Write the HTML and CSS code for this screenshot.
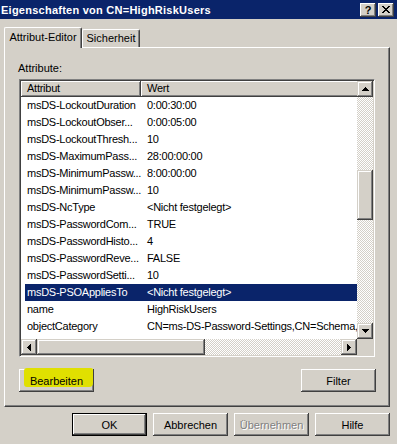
FILE: index.html
```html
<!DOCTYPE html>
<html lang="de">
<head>
    <meta charset="UTF-8">
    <title>Eigenschaften von CN=HighRiskUsers</title>
    <link rel="stylesheet" href="styles.css">
</head>
<body>

<div class="window">
    <div class="titlebar">
        <span class="title">Eigenschaften von CN=HighRiskUsers</span>
        <div class="caption-btns">
            <button class="cap" type="button">?</button>
            <button class="cap" type="button">
                <svg width="8" height="7" viewBox="0 0 8 7" shape-rendering="crispEdges">
                    <path d="M0 0h2v1h1v1h2V1h1V0h2v1H7v1H6v1H5v1h1v1h1v1h1v1H6V6H5V5H3v1H2v1H0V6h1V5h1V4h1V3H2V2H1V1H0z" fill="#000"/>
                </svg>
            </button>
        </div>
    </div>

    <div class="tabs">
        <div class="tab active">Attribut-Editor</div>
        <div class="tab">Sicherheit</div>
    </div>

    <div class="panel">
        <div class="label">Attribute:</div>

        <div class="listview">
            <div class="lv-content">
                <div class="lv-header">
                    <div class="hcell c1">Attribut</div>
                    <div class="hcell c2">Wert</div>
                </div>
                <div class="row"><div class="c1">msDS-LockoutDuration</div><div class="c2">0:00:30:00</div></div>
                <div class="row"><div class="c1">msDS-LockoutObser...</div><div class="c2">0:00:05:00</div></div>
                <div class="row"><div class="c1">msDS-LockoutThresh...</div><div class="c2">10</div></div>
                <div class="row"><div class="c1">msDS-MaximumPass...</div><div class="c2">28:00:00:00</div></div>
                <div class="row"><div class="c1">msDS-MinimumPassw...</div><div class="c2">8:00:00:00</div></div>
                <div class="row"><div class="c1">msDS-MinimumPassw...</div><div class="c2">10</div></div>
                <div class="row"><div class="c1">msDS-NcType</div><div class="c2">&lt;Nicht festgelegt&gt;</div></div>
                <div class="row"><div class="c1">msDS-PasswordCom...</div><div class="c2">TRUE</div></div>
                <div class="row"><div class="c1">msDS-PasswordHisto...</div><div class="c2">4</div></div>
                <div class="row"><div class="c1">msDS-PasswordReve...</div><div class="c2">FALSE</div></div>
                <div class="row"><div class="c1">msDS-PasswordSetti...</div><div class="c2">10</div></div>
                <div class="row selected"><div class="c1">msDS-PSOAppliesTo</div><div class="c2">&lt;Nicht festgelegt&gt;</div></div>
                <div class="row"><div class="c1">name</div><div class="c2">HighRiskUsers</div></div>
                <div class="row"><div class="c1">objectCategory</div><div class="c2">CN=ms-DS-Password-Settings,CN=Schema,CN=Configuration,DC=corp</div></div>
                <div class="row"><div class="c1">objectClass</div><div class="c2">top;msDS-PasswordSettings</div></div>
            </div>

            <div class="vscroll">
                <div class="sbtn">
                    <svg width="7" height="4" viewBox="0 0 7 4" shape-rendering="crispEdges"><path d="M3 0h1v1h1v1h1v1h1v1H0V3h1V2h1V1h1z"/></svg>
                </div>
                <div class="track" style="height:73px"></div>
                <div class="thumb" style="height:50px"></div>
                <div class="track grow"></div>
                <div class="sbtn">
                    <svg width="7" height="4" viewBox="0 0 7 4" shape-rendering="crispEdges"><path d="M0 0h7v1H6v1H5v1H4v1H3V3H2V2H1V1H0z"/></svg>
                </div>
            </div>

            <div class="hscroll">
                <div class="sbtn">
                    <svg width="4" height="7" viewBox="0 0 4 7" shape-rendering="crispEdges"><path d="M3 0h1v7H3V6H2V5H1V4H0V3h1V2h1V1h1z"/></svg>
                </div>
                <div class="thumb" style="width:168px"></div>
                <div class="track grow"></div>
                <div class="sbtn">
                    <svg width="4" height="7" viewBox="0 0 4 7" shape-rendering="crispEdges"><path d="M0 0h1v1h1v1h1v1h1v1H3v1H2v1H1v1H0z"/></svg>
                </div>
            </div>

            <div class="corner"></div>
        </div>

        <div class="panel-btns">
            <button class="btn edit" type="button"><span>Bearbeiten</span></button>
            <button class="btn" type="button">Filter</button>
        </div>
    </div>

    <div class="dialog-btns">
        <button class="btn default" type="button">OK</button>
        <button class="btn" type="button">Abbrechen</button>
        <button class="btn disabled" type="button">Übernehmen</button>
        <button class="btn" type="button">Hilfe</button>
    </div>
</div>

</body>
</html>
```

FILE: styles.css
```css
/* classic dialog window */
body {
    margin: 0;
    background-color: #d4d0c8;
    font-family: "Liberation Sans", Arial, sans-serif;
    font-size: 11px;
    color: #000;
}
.window {
    width: 397px;
    height: 444px;
    overflow: hidden;
}

/* title bar */
.titlebar {
    height: 19px;
    background-color: #0a246a;
    display: flex;
    align-items: center;
    justify-content: space-between;
    padding-left: 1px;
}
.title {
    color: #fff;
    font-weight: bold;
    font-size: 11px;
    letter-spacing: 0.25px;
    white-space: nowrap;
}
.caption-btns {
    display: flex;
    gap: 2px;
    margin-right: 3px;
}
.cap {
    width: 16px;
    height: 14px;
    padding: 0;
    border: none;
    background-color: #d4d0c8;
    box-shadow: inset -1px -1px #404040, inset 1px 1px #fff, inset -2px -2px #808080;
    font-family: "Liberation Sans", Arial, sans-serif;
    font-weight: bold;
    font-size: 11px;
    line-height: 14px;
    display: flex;
    align-items: center;
    justify-content: center;
}

/* tabs */
.tabs {
    display: flex;
    align-items: flex-end;
    margin-top: 8px;
    padding-left: 4px;
    height: 20px;
}
.tab {
    height: 18px;
    line-height: 17px;
    text-align: center;
    background-color: #d4d0c8;
    border-left: 1px solid #fff;
    border-top: 1px solid #fff;
    border-right: 1px solid #404040;
    box-shadow: inset -1px 0 #808080;
    border-radius: 2px 2px 0 0;
    box-sizing: border-box;
    width: 58px;
}
.tab.active {
    width: 78px;
    height: 21px;
    line-height: 19px;
    margin-bottom: -1px;
    position: relative;
    z-index: 1;
}

/* tab page */
.panel {
    margin-left: 4px;
    width: 386px;
    height: 360px;
    box-sizing: border-box;
    border-left: 1px solid #fff;
    border-top: 1px solid #fff;
    border-right: 1px solid #404040;
    border-bottom: 1px solid #404040;
    box-shadow: inset -1px -1px #808080;
    padding: 14px 0 0 14px;
}
.label {
    height: 13px;
    line-height: 13px;
    margin-left: -1px;
    margin-bottom: 4px;
}

/* list view */
.listview {
    width: 356px;
    height: 278px;
    box-sizing: border-box;
    border-top: 1px solid #808080;
    border-left: 1px solid #808080;
    border-right: 1px solid #fff;
    border-bottom: 1px solid #fff;
    box-shadow: inset 1px 1px #404040, inset -1px -1px #d4d0c8;
    padding: 1px;
    display: grid;
    grid-template-columns: 336px 16px;
    grid-template-rows: 258px 16px;
    background-color: #fff;
}
.lv-content {
    overflow: hidden;
    background-color: #fff;
    letter-spacing: -0.25px;
}
.lv-header {
    display: flex;
    height: 16px;
    white-space: nowrap;
}
.hcell {
    background-color: #d4d0c8;
    box-shadow: inset -1px -1px #404040, inset 1px 1px #fff, inset -2px -2px #808080;
    line-height: 15px;
    padding-left: 6px;
    box-sizing: border-box;
}
.hcell.c1 {
    width: 120px;
    flex: none;
}
.hcell.c2 {
    width: 260px;
    flex: none;
}
.row {
    display: flex;
    height: 17px;
    line-height: 17px;
    white-space: nowrap;
}
.row .c1 {
    width: 120px;
    flex: none;
    padding-left: 6px;
    box-sizing: border-box;
    overflow: hidden;
}
.row .c2 {
    padding-left: 6px;
}
.row.selected {
    background-color: #0a246a;
    color: #fff;
    margin-left: 4px;
}
.row.selected .c1 {
    width: 116px;
    padding-left: 2px;
}

/* scroll bars */
.vscroll {
    display: flex;
    flex-direction: column;
}
.hscroll {
    display: flex;
}
.sbtn {
    width: 16px;
    height: 16px;
    flex: none;
    background-color: #d4d0c8;
    box-shadow: inset -1px -1px #404040, inset 1px 1px #d4d0c8, inset -2px -2px #808080, inset 2px 2px #fff;
    display: flex;
    align-items: center;
    justify-content: center;
}
.sbtn svg {
    fill: #000;
}
.track {
    background: repeating-conic-gradient(#d4d0c8 0 25%, #fff 0 50%) 0 0 / 2px 2px;
}
.track.grow {
    flex: 1;
}
.thumb {
    flex: none;
    background-color: #d4d0c8;
    box-shadow: inset -1px -1px #404040, inset 1px 1px #d4d0c8, inset -2px -2px #808080, inset 2px 2px #fff;
}
.hscroll .track,
.hscroll .thumb {
    height: 16px;
}
.corner {
    background-color: #d4d0c8;
}

/* buttons */
.btn {
    width: 75px;
    height: 23px;
    padding: 0;
    border: none;
    background-color: #d4d0c8;
    box-shadow: inset -1px -1px #404040, inset 1px 1px #fff, inset -2px -2px #808080;
    font-family: "Liberation Sans", Arial, sans-serif;
    font-size: 11px;
    color: #000;
}
.btn.default {
    box-shadow: inset 0 0 0 1px #000, inset -2px -2px #404040, inset 2px 2px #fff, inset -3px -3px #808080;
}
.btn.disabled {
    color: #808080;
    text-shadow: 1px 1px #fff;
}
.panel-btns {
    width: 357px;
    margin-top: 12px;
    display: flex;
    justify-content: space-between;
}
.btn.edit {
    position: relative;
}
/* marker highlight drawn over the button */
.btn.edit::before {
    content: "";
    position: absolute;
    left: 5px;
    top: -1px;
    right: 1px;
    bottom: 5px;
    background-color: #e0e000;
    border-radius: 3px 2px 4px 3px;
}
.btn.edit span {
    position: relative;
}
.dialog-btns {
    display: flex;
    justify-content: flex-end;
    gap: 6px;
    margin-top: 6px;
    padding-right: 7px;
}
```
